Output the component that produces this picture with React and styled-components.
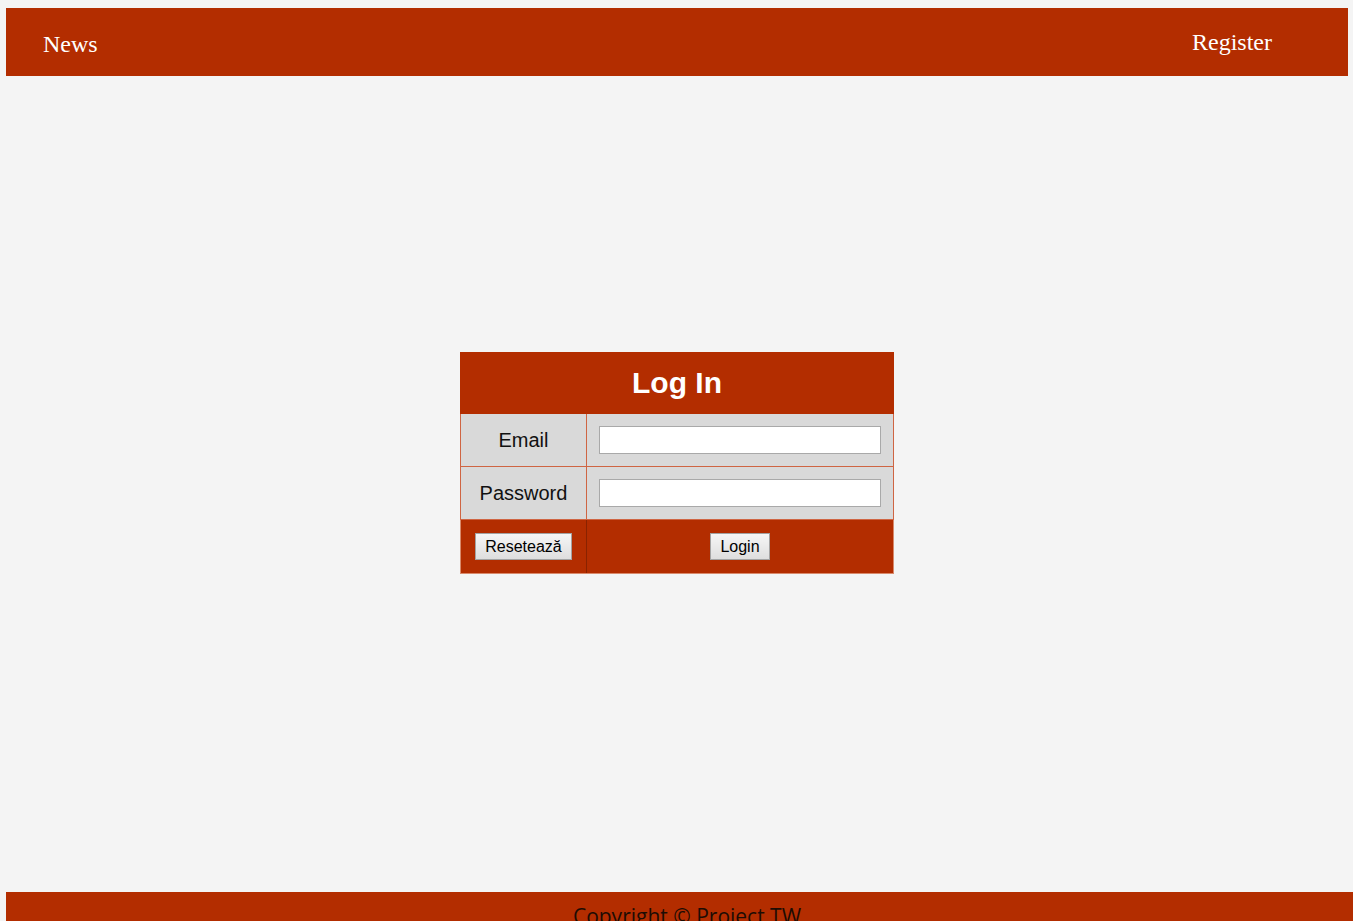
import React from 'react';
import styled, { createGlobalStyle } from 'styled-components';

const GlobalStyle = createGlobalStyle`
    html {
        overflow: hidden;
    }
    body {
        margin: 8px 0 0 6px;
        background: #f4f4f4;
        font-family: "Liberation Serif", "Times New Roman", serif;
    }
`;

const App = () => {
    return (
        <>
            <GlobalStyle />
            <Header>
                <NavLink $shift={2}>News</NavLink>
                <NavLink>Register</NavLink>
            </Header>
            <Main>
                <LoginTable>
                    <thead>
                        <tr>
                            <TitleCell colSpan={2}>Log In</TitleCell>
                        </tr>
                    </thead>
                    <tbody>
                        <tr>
                            <LabelCell>Email</LabelCell>
                            <InputCell>
                                <TextInput type="email" />
                            </InputCell>
                        </tr>
                        <tr>
                            <LabelCell>Password</LabelCell>
                            <InputCell>
                                <TextInput type="password" />
                            </InputCell>
                        </tr>
                        <tr>
                            <ActionCell $first>
                                <FormButton type="reset">Resetează</FormButton>
                            </ActionCell>
                            <ActionCell>
                                <FormButton type="submit">Login</FormButton>
                            </ActionCell>
                        </tr>
                    </tbody>
                </LoginTable>
            </Main>
            <Footer>
                <FooterText>Copyright © Project TW</FooterText>
            </Footer>
        </>
    );
};

export default App;

const Header = styled.header`
    height: 68px;
    margin-right: 5px;
    background: #b32d00;
    display: flex;
    align-items: center;
    justify-content: space-between;
    padding: 0 76px 0 37px;
`;

const NavLink = styled.a`
    color: #fff;
    font-size: 24px;
    cursor: pointer;
    margin-top: ${p => (p.$shift ? p.$shift * 2 : 0)}px;
`;

const Main = styled.main`
    height: 816px;
    box-sizing: border-box;
    padding-top: 276px;
    margin-right: 5px;
    display: flex;
    justify-content: center;
    align-items: flex-start;
`;

const LoginTable = styled.table`
    width: 434px;
    border-collapse: collapse;
    font-family: "Liberation Sans", Arial, sans-serif;
`;

const TitleCell = styled.th`
    height: 60px;
    padding: 0;
    background: #b32d00;
    color: #fff;
    font-size: 30px;
    font-weight: 700;
    text-align: center;
    border: 1px solid #b32d00;
`;

const LabelCell = styled.td`
    width: 125px;
    height: 52px;
    padding: 0;
    background: #d9d9d9;
    color: #111;
    font-size: 20px;
    text-align: center;
    border: 1px solid #cf6543;
`;

const InputCell = styled.td`
    height: 52px;
    padding: 0 12px;
    background: #d9d9d9;
    border: 1px solid #cf6543;
`;

const TextInput = styled.input`
    display: block;
    width: 100%;
    height: 28px;
    box-sizing: border-box;
    border: 1px solid #a9a9a9;
    background: #fff;
    margin: 0;
`;

const ActionCell = styled.td`
    height: 53px;
    padding: 0;
    background: #b32d00;
    text-align: center;
    border: 1px solid #d98a6c;
    border-top-color: #cf6543;
    border-right-color: ${p => (p.$first ? '#8a2200' : '#d98a6c')};
    border-left-color: ${p => (p.$first ? '#d98a6c' : '#8a2200')};
`;

const FormButton = styled.button`
    height: 27px;
    padding: 0 9px;
    font-family: "Liberation Sans", Arial, sans-serif;
    font-size: 16px;
    color: #000;
    border: 1px solid #a3a3a3;
    border-radius: 0;
    background: linear-gradient(#f6f6f6, #dedede);
`;

const Footer = styled.footer`
    height: 60px;
    width: calc(100% + 20px);
    background: #b32d00;
    box-sizing: border-box;
    display: flex;
    justify-content: center;
    padding-right: 5px;
`;

const FooterText = styled.p`
    margin: 10px 0 0;
    font-family: "Open Sans", sans-serif;
    font-size: 21px;
    color: #1d0c04;
`;
